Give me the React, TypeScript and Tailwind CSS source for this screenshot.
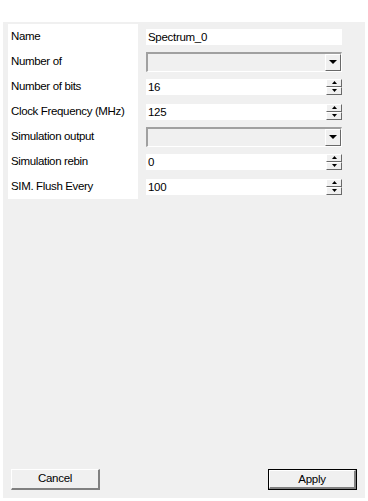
import React from "react";

const font = { fontFamily: '"Liberation Sans", Arial, sans-serif' };

function Spinner() {
  return (
    <div className="flex flex-col w-[16px] h-[16px] ml-auto">
      <div className="h-[8px] bg-[#f0f0f0] border-t border-l border-white border-r border-b border-r-[#696969] border-b-[#696969] flex items-center justify-center">
        <svg width="5" height="3" viewBox="0 0 5 3">
          <path d="M2.5 0 L5 3 L0 3 Z" fill="#000" />
        </svg>
      </div>
      <div className="h-[8px] bg-[#f0f0f0] border-t border-l border-white border-r border-b border-r-[#696969] border-b-[#696969] flex items-center justify-center">
        <svg width="5" height="3" viewBox="0 0 5 3">
          <path d="M0 0 L5 0 L2.5 3 Z" fill="#000" />
        </svg>
      </div>
    </div>
  );
}

function NumberField({ value }: { value: string }) {
  return (
    <div className="h-[25px] flex items-center">
      <div className="flex items-center w-full h-[16px]">
        <div className="flex-1 h-[16px] bg-white pl-[2px] text-[11.5px] tracking-[-0.3px] leading-[16px] text-black">
          {value}
        </div>
        <Spinner />
      </div>
    </div>
  );
}

function ComboField() {
  return (
    <div className="h-[25px] flex items-center">
      <div className="w-full h-[20px] border-t-2 border-l-2 border-t-[#a0a0a0] border-l-[#a0a0a0] border-b border-r border-white bg-[#f0f0f0] flex justify-end items-stretch">
        <div className="w-[16px] bg-[#f0f0f0] border-t border-l border-white border-r border-b border-r-[#696969] border-b-[#696969] flex items-center justify-center">
          <svg width="8" height="4" viewBox="0 0 8 4">
            <path d="M0 0 L8 0 L4 4 Z" fill="#000" />
          </svg>
        </div>
      </div>
    </div>
  );
}

export default function App() {
  const labels = [
    "Name",
    "Number of",
    "Number of bits",
    "Clock Frequency (MHz)",
    "Simulation output",
    "Simulation rebin",
    "SIM. Flush Every",
  ];

  return (
    <div className="w-[368px] h-[501px] bg-white pt-[22px] px-[3px] pb-[3px]" style={font}>
      <div className="h-full bg-[#f0f0f0] flex flex-col">
        <div className="flex pt-[2px] pl-[5px]">
          <div className="w-[130px] bg-white flex flex-col">
            {labels.map((l) => (
              <div key={l} className="h-[25px] flex items-center pl-[3px] text-[11.5px] tracking-[-0.35px] text-black">
                {l}
              </div>
            ))}
          </div>
          <div className="ml-[8px] w-[196px] flex flex-col">
            <div className="h-[25px] flex items-center">
              <div className="w-full h-[16px] bg-white pl-[2px] text-[11.5px] tracking-[-0.3px] leading-[16px] text-black">
                Spectrum_0
              </div>
            </div>
            <ComboField />
            <NumberField value="16" />
            <NumberField value="125" />
            <ComboField />
            <NumberField value="0" />
            <NumberField value="100" />
          </div>
        </div>
        <div className="mt-auto flex justify-between px-[8px] pb-[8px]">
          <button className="w-[89px] h-[21px] bg-[#f0f0f0] border-t border-l border-white border-r-2 border-b-2 border-r-[#808080] border-b-[#808080] text-[11.5px] tracking-[-0.3px] text-black">
            Cancel
          </button>
          <div className="border border-black">
            <button className="w-[87px] h-[19px] bg-[#f0f0f0] border-t border-l border-white border-r-2 border-b-2 border-r-[#808080] border-b-[#808080] text-[11.5px] tracking-[-0.3px] text-black block">
              Apply
            </button>
          </div>
        </div>
      </div>
    </div>
  );
}
